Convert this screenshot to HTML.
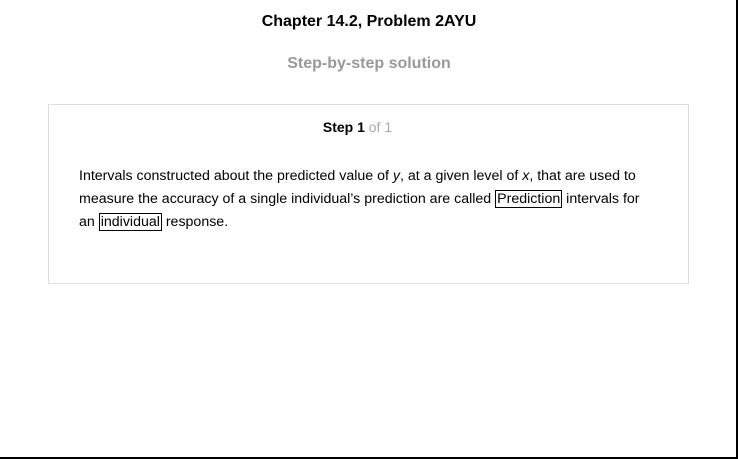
<!DOCTYPE html>
<html><head><style>
html,body{margin:0;padding:0;background:#fff;}
body{width:738px;height:459px;position:relative;overflow:hidden;font-family:"Liberation Sans",Arial,sans-serif;}
.frame{position:absolute;left:0;top:0;width:736px;height:457px;border-right:2px solid #000;border-bottom:2px solid #000;}
.t{position:absolute;left:0;width:738px;text-align:center;font-weight:bold;font-size:16px;}
.box{position:absolute;left:48px;top:104px;width:639px;height:178px;border:1px solid #ddd;}
.step{position:absolute;left:0;width:617px;top:14px;text-align:center;font-size:14px;font-weight:bold;color:#000;}
.step span{color:#aaa;font-weight:normal;}
.p{position:absolute;left:30px;top:60px;width:570px;font-size:14.2px;line-height:23px;color:#000;}
.b{border:1px solid #000;padding:0 1px;}
</style></head><body>
<div class="frame"></div>
<div class="t" style="top:13px;color:#000">Chapter 14.2, Problem 2AYU</div>
<div class="t" style="top:55px;color:#999">Step-by-step solution</div>
<div class="box">
<div class="step">Step 1 <span>of 1</span></div>
<div class="p">Intervals constructed about the predicted value of <i>y</i>, at a given level of <i>x</i>, that are used to measure the accuracy of a single individual’s prediction are called <span class="b">Prediction</span> intervals for<br>an <span class="b">individual</span> response.</div>
</div>
</body></html>
